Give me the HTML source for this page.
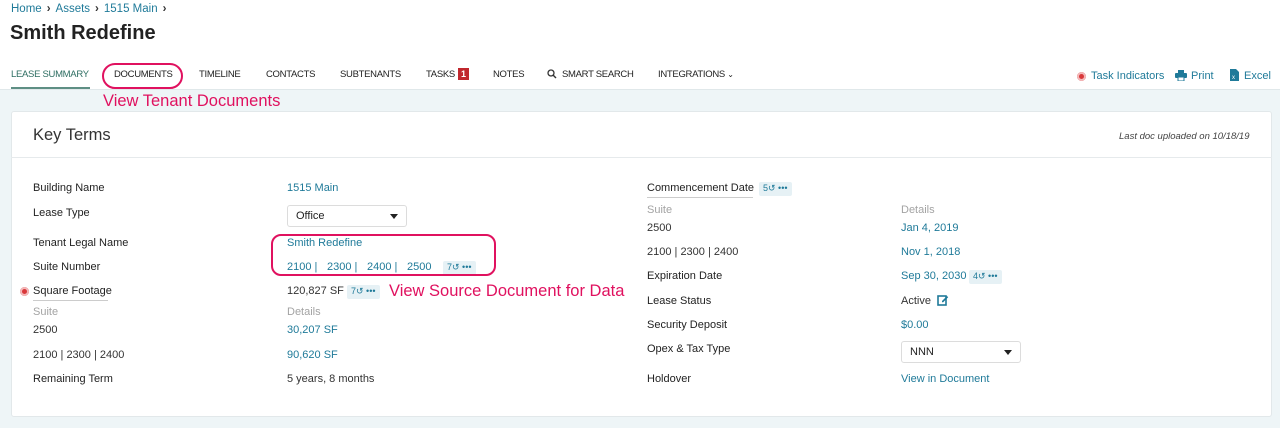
<!DOCTYPE html>
<html><head><meta charset="utf-8"><style>
*{box-sizing:border-box;margin:0;padding:0}
body{width:1280px;height:428px;overflow:hidden;background:#fff;font-family:"Liberation Sans",sans-serif;position:relative;color:#333}
.a{position:absolute;white-space:nowrap}
.bc{font-size:11.5px;color:#1f7a99}
.bc b{color:#333;font-weight:bold;margin:0 5px}
.nav{font-size:9.5px;color:#222;top:69px;letter-spacing:-0.3px}
.l{font-size:11px;color:#222}
.v{font-size:11px;color:#1f7a99}
.d{font-size:11px;color:#333}
.g{font-size:11px;color:#a3a3a3}
.bg{position:absolute;left:0;top:89px;width:1280px;height:339px;background:#eef5f7;border-top:1px solid #e0e8ea}
.card{position:absolute;left:11px;top:111px;width:1261px;height:306px;background:#fff;border:1px solid #e2e8ea;border-radius:3px}
.sel{position:absolute;height:22px;border:1px solid #dcdcdc;border-radius:3px;background:#fff;font-size:11px;color:#222;padding:4px 0 0 8px}
.sel:after{content:"";position:absolute;right:8px;top:8px;border-left:4px solid transparent;border-right:4px solid transparent;border-top:5px solid #222}
.badge{position:absolute;height:14px;background:#e6f1f5;font-size:9px;color:#1f7a99;padding:1px 4px;border-radius:2px;white-space:nowrap}
.red{color:#e0115f;font-size:16.5px}
.dot{position:absolute;width:9px;height:9px;border-radius:50%;background:#d9383a;box-shadow:inset 0 0 0 2px #f3b9ba}
</style></head><body>
<div class="a bc" style="left:11px;top:3px">Home<b>›</b>Assets<b>›</b>1515 Main<b>›</b></div>
<div class="a" style="left:10px;top:22px;font-size:20px;font-weight:bold;color:#222">Smith Redefine</div>

<div class="a nav" style="left:11px;color:#2e6e62">LEASE SUMMARY</div>
<div class="a" style="left:11px;top:87px;width:79px;height:2px;background:#5e8f84"></div>
<div class="a nav" style="left:114px">DOCUMENTS</div>
<div class="a" style="left:102px;top:63px;width:81px;height:26px;border:2px solid #e0115f;border-radius:13px"></div>
<div class="a nav" style="left:199px">TIMELINE</div>
<div class="a nav" style="left:266px">CONTACTS</div>
<div class="a nav" style="left:340px">SUBTENANTS</div>
<div class="a nav" style="left:426px">TASKS</div>
<div class="a" style="left:458px;top:68px;width:11px;height:12px;background:#c0272d;color:#fff;font-size:9px;font-weight:bold;text-align:center;line-height:12px">1</div>
<div class="a nav" style="left:493px">NOTES</div>
<svg class="a" style="left:547px;top:69px" width="10" height="10" viewBox="0 0 10 10"><circle cx="4" cy="4" r="3" fill="none" stroke="#333" stroke-width="1.3"/><path d="M6 6l3 3" stroke="#333" stroke-width="1.4"/></svg>
<div class="a nav" style="left:562px">SMART SEARCH</div>
<div class="a nav" style="left:658px">INTEGRATIONS <span style="font-size:8px">⌄</span></div>

<div class="dot" style="left:1077px;top:72px"></div>
<div class="a" style="left:1091px;top:70px;font-size:11px;color:#1f7a99">Task Indicators</div>
<svg class="a" style="left:1175px;top:70px" width="12" height="11" viewBox="0 0 12 11"><rect x="3" y="0" width="6" height="3" fill="#1f7a99"/><rect x="0" y="3" width="12" height="5" rx="1" fill="#1f7a99"/><rect x="3" y="7" width="6" height="4" fill="#fff" stroke="#1f7a99"/></svg>
<div class="a" style="left:1191px;top:70px;font-size:11px;color:#1f7a99">Print</div>
<svg class="a" style="left:1230px;top:69px" width="9" height="12" viewBox="0 0 9 12"><path d="M0 0h6l3 3v9H0z" fill="#1f7a99"/><text x="2" y="10" font-size="6" fill="#fff" font-family="Liberation Sans">x</text></svg>
<div class="a" style="left:1244px;top:70px;font-size:11px;color:#1f7a99">Excel</div>

<div class="bg"></div>
<div class="a red" style="left:103px;top:92px">View Tenant Documents</div>
<div class="card"></div>
<div class="a" style="left:33px;top:126px;font-size:16.5px;color:#333">Key Terms</div>
<div class="a" style="left:11px;top:157px;width:1261px;height:1px;background:#e6eaec"></div>
<div class="a" style="left:1119px;top:131px;font-size:9.5px;font-style:italic;color:#444">Last doc uploaded on 10/18/19</div>

<div class="a l" style="left:33px;top:182px">Building Name</div>
<div class="a v" style="left:287px;top:182px">1515 Main</div>
<div class="a l" style="left:33px;top:207px">Lease Type</div>
<div class="sel" style="left:287px;top:205px;width:120px">Office</div>
<div class="a l" style="left:33px;top:237px">Tenant Legal Name</div>
<div class="a v" style="left:287px;top:237px">Smith Redefine</div>
<div class="a l" style="left:33px;top:261px">Suite Number</div>
<div class="a v" style="left:287px;top:261px">2100 |</div>
<div class="a v" style="left:327px;top:261px">2300 |</div>
<div class="a v" style="left:367px;top:261px">2400 |</div>
<div class="a v" style="left:407px;top:261px">2500</div>
<div class="badge" style="left:443px;top:261px">7↺ •••</div>
<div class="a" style="left:271px;top:234px;width:225px;height:42px;border:2px solid #e0115f;border-radius:10px"></div>
<div class="dot" style="left:20px;top:287px"></div>
<div class="a l" style="left:33px;top:285px">Square Footage</div>
<div class="a" style="left:33px;top:300px;width:75px;height:1px;background:#ccc"></div>
<div class="a d" style="left:287px;top:285px">120,827 SF</div>
<div class="badge" style="left:347px;top:285px">7↺ •••</div>
<div class="a red" style="left:389px;top:282px">View Source Document for Data</div>
<div class="a g" style="left:33px;top:306px">Suite</div>
<div class="a g" style="left:287px;top:306px">Details</div>
<div class="a d" style="left:33px;top:324px">2500</div>
<div class="a v" style="left:287px;top:324px">30,207 SF</div>
<div class="a d" style="left:33px;top:349px">2100 | 2300 | 2400</div>
<div class="a v" style="left:287px;top:349px">90,620 SF</div>
<div class="a l" style="left:33px;top:373px">Remaining Term</div>
<div class="a d" style="left:287px;top:373px">5 years, 8 months</div>

<div class="a l" style="left:647px;top:182px">Commencement Date</div>
<div class="a" style="left:647px;top:197px;width:106px;height:1px;background:#ccc"></div>
<div class="badge" style="left:759px;top:182px">5↺ •••</div>
<div class="a g" style="left:647px;top:204px">Suite</div>
<div class="a g" style="left:901px;top:204px">Details</div>
<div class="a d" style="left:647px;top:222px">2500</div>
<div class="a v" style="left:901px;top:222px">Jan 4, 2019</div>
<div class="a d" style="left:647px;top:246px">2100 | 2300 | 2400</div>
<div class="a v" style="left:901px;top:246px">Nov 1, 2018</div>
<div class="a l" style="left:647px;top:270px">Expiration Date</div>
<div class="a v" style="left:901px;top:270px">Sep 30, 2030</div>
<div class="badge" style="left:969px;top:270px">4↺ •••</div>
<div class="a l" style="left:647px;top:295px">Lease Status</div>
<div class="a d" style="left:901px;top:295px">Active</div>
<svg class="a" style="left:937px;top:294px" width="12" height="12" viewBox="0 0 12 12"><rect x="1" y="2" width="8" height="9" fill="none" stroke="#1f7a99" stroke-width="1.6"/><path d="M5 7l5-5 1.2 1.2-5 5H5z" fill="#1f7a99"/></svg>
<div class="a l" style="left:647px;top:319px">Security Deposit</div>
<div class="a v" style="left:901px;top:319px">$0.00</div>
<div class="a l" style="left:647px;top:343px">Opex &amp; Tax Type</div>
<div class="sel" style="left:901px;top:341px;width:120px">NNN</div>
<div class="a l" style="left:647px;top:373px">Holdover</div>
<div class="a v" style="left:901px;top:373px">View in Document</div>
</body></html>
